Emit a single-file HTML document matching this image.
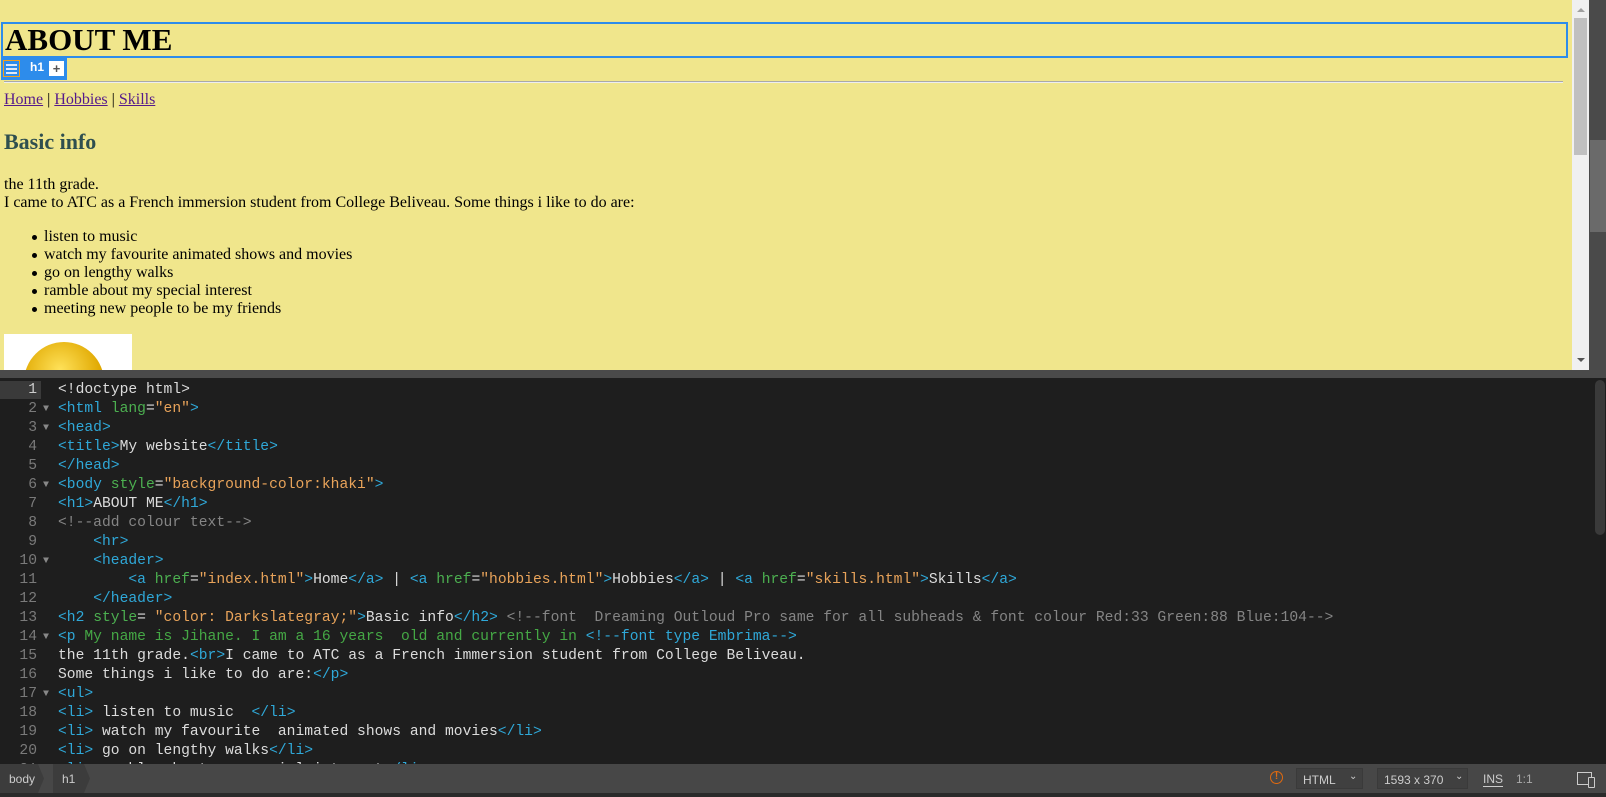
<!DOCTYPE html>
<html><head><meta charset="utf-8">
<style>
*{margin:0;padding:0;box-sizing:border-box}
body{width:1606px;height:797px;overflow:hidden;background:#1e1e1e;position:relative;font-family:"Liberation Serif",serif}
#prev{position:absolute;left:0;top:0;width:1572px;height:370px;background:#f0e68c;overflow:hidden;color:#000;font-size:16px}
#h1box{position:absolute;left:1px;top:22px;width:1567px;height:36px;border:2px solid #2d8ceb}
#h1box span{position:absolute;left:2px;top:1px;font-size:31px;font-weight:bold;line-height:30px}
#tb{position:absolute;left:1px;top:58px;width:66px;height:22px;background:#2d8ceb}
#ham{position:absolute;left:2px;top:2px;width:17px;height:17px;border:1px solid #f0a020;padding:2px 2px}
#ham i{display:block;height:2px;background:#dfe8f5;margin:1px 0 2px}
#tb b{position:absolute;left:29px;top:2px;color:#fff;font:bold 12px "Liberation Sans",sans-serif}
#plus{position:absolute;left:48px;top:3px;width:15px;height:15px;background:#fff;color:#555;font:bold 13px "Liberation Sans",sans-serif;text-align:center;line-height:15px}
#hr{position:absolute;left:4px;top:81px;width:1559px;height:2px;background:#a9a9a9;border-bottom:1px solid #eee}
.t{position:absolute;left:4px;white-space:nowrap;line-height:18px}
a{color:#551a8b;text-decoration:underline}
.li{left:44px}
.li:before{content:"";position:absolute;left:-12px;top:7px;width:5px;height:5px;border-radius:50%;background:#000}
#img{position:absolute;left:4px;top:334px;width:128px;height:40px;background:#fff}
#sb{position:absolute;left:1572px;top:0;width:17px;height:370px;background:#f0f0f0}
#rc{position:absolute;left:1589px;top:0;width:17px;height:378px;background:#4a4a4a}
#div{position:absolute;left:0;top:370px;width:1606px;height:8px;background:#4a4a4a}
#code{position:absolute;left:0;top:381px;width:1590px;font-family:"Liberation Mono",monospace;font-size:14.66px;color:#dcdcdc}
.l{height:19px;line-height:19px;white-space:pre;position:relative}
.n{position:absolute;left:0;width:37px;text-align:right;color:#7a7a7a}
.f{position:absolute;left:43px;color:#888;font-size:10px}
.c{position:absolute;left:58px}
.g{color:#2fa8d8}.a{color:#4caf50}.s{color:#e8a35a}.m{color:#858585}.p{color:#45a845}
#status{position:absolute;left:0;top:764px;width:1606px;height:29px;background:#474747;font:12px "Liberation Sans",sans-serif;color:#ccc}
#bot{position:absolute;left:0;top:793px;width:1606px;height:4px;background:#2a2a2a}
</style></head><body>
<div id="prev">
<div id="h1box"><span>ABOUT ME</span></div>
<div id="tb"><div id="ham"><i></i><i></i><i></i></div><b>h1</b><div id="plus">+</div></div>
<div id="hr"></div>
<div class="t" style="top:91px"><a>Home</a> | <a>Hobbies</a> | <a>Skills</a></div>
<div class="t" style="top:128px;font-size:22px;font-weight:bold;color:#2f4f4f;line-height:28px">Basic info</div>
<div class="t" style="top:176px">the 11th grade.</div>
<div class="t" style="top:194px">I came to ATC as a French immersion student from College Beliveau. Some things i like to do are:</div>
<div class="t li" style="top:228px">listen to music</div>
<div class="t li" style="top:246px">watch my favourite animated shows and movies</div>
<div class="t li" style="top:264px">go on lengthy walks</div>
<div class="t li" style="top:282px">ramble about my special interest</div>
<div class="t li" style="top:300px">meeting new people to be my friends</div>
<div id="img"><div style="position:absolute;left:20px;top:8px;width:80px;height:80px;border-radius:50%;background:radial-gradient(circle at 45% 35%,#ffe25a,#e0a800 60%,#b07800)"></div></div>
</div>
<div id="sb"><div style="position:absolute;left:2px;top:18px;width:13px;height:137px;background:#c0c0c0"></div>
<div style="position:absolute;left:5px;top:8px;border:4px solid transparent;border-bottom:4px solid #a0a0a0;border-top:0"></div>
<div style="position:absolute;left:5px;top:358px;border:4px solid transparent;border-top:4px solid #555;border-bottom:0"></div></div>
<div id="rc"><div style="position:absolute;left:1px;top:140px;width:16px;height:92px;background:#6a6a6a"></div></div>
<div id="div"></div>
<div style="position:absolute;left:0;top:381px;width:41px;height:18px;background:#3a3a3a"></div>
<div style="position:absolute;left:1595px;top:380px;width:10px;height:155px;border-radius:5px;background:#3a3a3a"></div>
<div id="code">
<div class="l"><span class="n" style="color:#ccc">1</span><span class="c">&lt;!doctype html&gt;</span></div>
<div class="l"><span class="n">2</span><span class="f">▼</span><span class="c"><span class="g">&lt;html</span> <span class="a">lang</span>=<span class="s">"en"</span><span class="g">&gt;</span></span></div>
<div class="l"><span class="n">3</span><span class="f">▼</span><span class="c"><span class="g">&lt;head&gt;</span></span></div>
<div class="l"><span class="n">4</span><span class="c"><span class="g">&lt;title&gt;</span>My website<span class="g">&lt;/title&gt;</span></span></div>
<div class="l"><span class="n">5</span><span class="c"><span class="g">&lt;/head&gt;</span></span></div>
<div class="l"><span class="n">6</span><span class="f">▼</span><span class="c"><span class="g">&lt;body</span> <span class="a">style</span>=<span class="s">"background-color:khaki"</span><span class="g">&gt;</span></span></div>
<div class="l"><span class="n">7</span><span class="c"><span class="g">&lt;h1&gt;</span>ABOUT ME<span class="g">&lt;/h1&gt;</span></span></div>
<div class="l"><span class="n">8</span><span class="c m">&lt;!--add colour text--&gt;</span></div>
<div class="l"><span class="n">9</span><span class="c">    <span class="g">&lt;hr&gt;</span></span></div>
<div class="l"><span class="n">10</span><span class="f">▼</span><span class="c">    <span class="g">&lt;header&gt;</span></span></div>
<div class="l"><span class="n">11</span><span class="c">        <span class="g">&lt;a</span> <span class="a">href</span>=<span class="s">"index.html"</span><span class="g">&gt;</span>Home<span class="g">&lt;/a&gt;</span> | <span class="g">&lt;a</span> <span class="a">href</span>=<span class="s">"hobbies.html"</span><span class="g">&gt;</span>Hobbies<span class="g">&lt;/a&gt;</span> | <span class="g">&lt;a</span> <span class="a">href</span>=<span class="s">"skills.html"</span><span class="g">&gt;</span>Skills<span class="g">&lt;/a&gt;</span></span></div>
<div class="l"><span class="n">12</span><span class="c">    <span class="g">&lt;/header&gt;</span></span></div>
<div class="l"><span class="n">13</span><span class="c"><span class="g">&lt;h2</span> <span class="a">style</span>= <span class="s">"color: Darkslategray;"</span><span class="g">&gt;</span>Basic info<span class="g">&lt;/h2&gt;</span> <span class="m">&lt;!--font  Dreaming Outloud Pro same for all subheads &amp; font colour Red:33 Green:88 Blue:104--&gt;</span></span></div>
<div class="l"><span class="n">14</span><span class="f">▼</span><span class="c"><span class="g">&lt;p</span><span class="p"> My name is Jihane. I am a 16 years  old and currently in </span><span class="g">&lt;!--font type Embrima--&gt;</span></span></div>
<div class="l"><span class="n">15</span><span class="c">the 11th grade.<span class="g">&lt;br&gt;</span>I came to ATC as a French immersion student from College Beliveau.</span></div>
<div class="l"><span class="n">16</span><span class="c">Some things i like to do are:<span class="g">&lt;/p&gt;</span></span></div>
<div class="l"><span class="n">17</span><span class="f">▼</span><span class="c"><span class="g">&lt;ul&gt;</span></span></div>
<div class="l"><span class="n">18</span><span class="c"><span class="g">&lt;li&gt;</span> listen to music  <span class="g">&lt;/li&gt;</span></span></div>
<div class="l"><span class="n">19</span><span class="c"><span class="g">&lt;li&gt;</span> watch my favourite  animated shows and movies<span class="g">&lt;/li&gt;</span></span></div>
<div class="l"><span class="n">20</span><span class="c"><span class="g">&lt;li&gt;</span> go on lengthy walks<span class="g">&lt;/li&gt;</span></span></div>
<div class="l"><span class="n">21</span><span class="c"><span class="g">&lt;li&gt;</span> ramble about my special interest<span class="g">&lt;/li&gt;</span></span></div>
</div>
<div id="status">
<div style="position:absolute;left:0;top:0;width:44px;height:29px;background:#3c3c3c;clip-path:polygon(0 0,38px 0,44px 50%,38px 100%,0 100%)"></div>
<span style="position:absolute;left:9px;top:8px">body</span>
<div style="position:absolute;left:53px;top:0;width:37px;height:29px;background:#3c3c3c;clip-path:polygon(0 0,31px 0,37px 50%,31px 100%,0 100%)"></div>
<span style="position:absolute;left:62px;top:8px">h1</span>
<div style="position:absolute;left:1270px;top:7px;width:13px;height:13px;border:1.5px solid #e06a10;border-radius:50%;color:#e06a10;font:bold 10px 'Liberation Sans',sans-serif;text-align:center;line-height:10px">!</div>
<div style="position:absolute;left:1296px;top:4px;width:67px;height:21px;border:1px solid #3a3a3a;background:#404040"><span style="position:absolute;left:6px;top:4px">HTML</span><span style="position:absolute;left:52px;top:2px;font-size:10px">⌄</span></div>
<div style="position:absolute;left:1377px;top:4px;width:91px;height:21px;border:1px solid #3a3a3a;background:#404040"><span style="position:absolute;left:6px;top:4px">1593 x 370</span><span style="position:absolute;left:77px;top:2px;font-size:10px">⌄</span></div>
<span style="position:absolute;left:1483px;top:8px;border-bottom:1px solid #ccc">INS</span>
<span style="position:absolute;left:1516px;top:8px;color:#aaa">1:1</span>
<div style="position:absolute;left:1577px;top:8px;width:15px;height:13px;border:1.5px solid #ccc"></div>
<div style="position:absolute;left:1588px;top:13px;width:7px;height:11px;border:1.5px solid #ccc;background:#474747;border-radius:1px"></div>
</div>
<div id="bot"></div>
</body></html>
